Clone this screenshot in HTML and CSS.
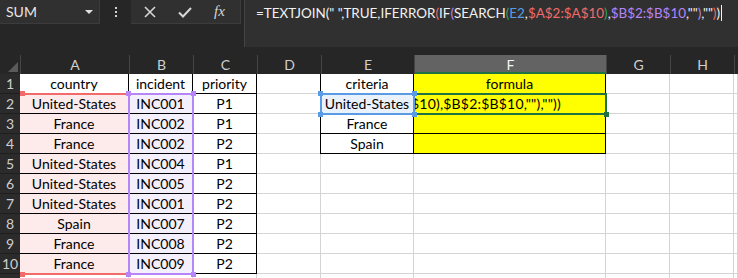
FILE: index.html
```html
<!DOCTYPE html>
<html lang="en">
<head>
    <meta charset="UTF-8">
    <title>TEXTJOIN</title>
    <link rel="stylesheet" href="styles.css">
</head>
<body>
<div class="app">
    <div class="toolbar">
        <div class="tools">
            <div class="namebox">SUM <span class="caret"></span></div>
            <div class="dots"><i></i><i></i><i></i></div>
            <div class="fbuttons">
                <svg width="12" height="12" viewBox="0 0 12 12"><path d="M1 1L11 11M11 1L1 11" stroke="#d6d6d6" stroke-width="1.6" fill="none"/></svg>
                <svg width="14" height="12" viewBox="0 0 14 12"><path d="M1 6.5L5 10.5L13 2" stroke="#d6d6d6" stroke-width="2" fill="none"/></svg>
                <span class="fx">fx</span>
            </div>
        </div>
        <div class="formula">=TEXTJOIN(" ",TRUE,IFERROR<span class="r">(</span>IF<span class="p">(</span>SEARCH<span class="g">(</span><span class="b">E2</span>,<span class="r">$A$2:$A$10</span><span class="g">)</span>,<span class="p">$B$2:$B$10</span>,""<span class="p">)</span>,""<span class="r">)</span>)<span class="cursor"></span></div>
    </div>

    <div class="sheet">
        <div class="row head">
            <div class="corner"><span></span></div>
            <div class="ch">A</div><div class="ch">B</div><div class="ch">C</div><div class="ch">D</div>
            <div class="ch">E</div><div class="ch on">F</div><div class="ch">G</div><div class="ch">H</div><div class="ch"></div>
        </div>
        <div class="row">
            <div class="rh">1</div>
            <div class="c t">country</div><div class="c t">incident</div><div class="c t">priority</div><div class="c"></div>
            <div class="c t tl">criteria</div><div class="c t y">formula</div><div class="c"></div><div class="c"></div><div class="c"></div>
        </div>
        <div class="row">
            <div class="rh">2</div>
            <div class="c t ra">United-States</div><div class="c t rb">INC001</div><div class="c t">P1</div><div class="c"></div>
            <div class="c t tl sel">United-States</div>
            <div class="c t y edit"><span>$10),$B$2:$B$10,""),""))</span></div>
            <div class="c"></div><div class="c"></div><div class="c"></div>
        </div>
        <div class="row">
            <div class="rh">3</div>
            <div class="c t ra">France</div><div class="c t rb">INC002</div><div class="c t">P1</div><div class="c"></div>
            <div class="c t tl">France</div><div class="c t y"></div><div class="c"></div><div class="c"></div><div class="c"></div>
        </div>
        <div class="row">
            <div class="rh">4</div>
            <div class="c t ra">France</div><div class="c t rb">INC002</div><div class="c t">P2</div><div class="c"></div>
            <div class="c t tl">Spain</div><div class="c t y"></div><div class="c"></div><div class="c"></div><div class="c"></div>
        </div>
        <div class="row">
            <div class="rh">5</div>
            <div class="c t ra">United-States</div><div class="c t rb">INC004</div><div class="c t">P1</div><div class="c"></div>
            <div class="c"></div><div class="c"></div><div class="c"></div><div class="c"></div><div class="c"></div>
        </div>
        <div class="row">
            <div class="rh">6</div>
            <div class="c t ra">United-States</div><div class="c t rb">INC005</div><div class="c t">P2</div><div class="c"></div>
            <div class="c"></div><div class="c"></div><div class="c"></div><div class="c"></div><div class="c"></div>
        </div>
        <div class="row">
            <div class="rh">7</div>
            <div class="c t ra">United-States</div><div class="c t rb">INC001</div><div class="c t">P2</div><div class="c"></div>
            <div class="c"></div><div class="c"></div><div class="c"></div><div class="c"></div><div class="c"></div>
        </div>
        <div class="row">
            <div class="rh">8</div>
            <div class="c t ra">Spain</div><div class="c t rb">INC007</div><div class="c t">P2</div><div class="c"></div>
            <div class="c"></div><div class="c"></div><div class="c"></div><div class="c"></div><div class="c"></div>
        </div>
        <div class="row">
            <div class="rh">9</div>
            <div class="c t ra">France</div><div class="c t rb">INC008</div><div class="c t">P2</div><div class="c"></div>
            <div class="c"></div><div class="c"></div><div class="c"></div><div class="c"></div><div class="c"></div>
        </div>
        <div class="row">
            <div class="rh">10</div>
            <div class="c t ra">France</div><div class="c t rb">INC009</div><div class="c t">P2</div><div class="c"></div>
            <div class="c"></div><div class="c"></div><div class="c"></div><div class="c"></div><div class="c"></div>
        </div>
        <div class="row">
            <div class="rh"></div>
            <div class="c"></div><div class="c"></div><div class="c"></div><div class="c"></div>
            <div class="c"></div><div class="c"></div><div class="c"></div><div class="c"></div><div class="c"></div>
        </div>

        <!-- reference highlights drawn over the grid -->
        <div class="range range-a"><i class="h tl"></i><i class="h bl"></i></div>
        <div class="range range-b"><i class="h tl"></i><i class="h tr"></i><i class="h bl"></i><i class="h br"></i></div>
        <div class="range range-f"><i class="h br"></i></div>
        <div class="range range-e"><i class="h tl"></i><i class="h tr"></i><i class="h bl"></i><i class="h br"></i></div>
    </div>
</div>
</body>
</html>
```

FILE: styles.css
```css
body {
    margin: 0;
    background: #262626;
    font-family: Lato, "Liberation Sans", sans-serif;
    overflow: hidden;
}
.app {
    width: 738px;
    height: 278px;
    overflow: hidden;
}

/* toolbar / formula bar */
.toolbar {
    display: flex;
    height: 55px;
}
.tools {
    display: flex;
    height: 24px;
}
.namebox {
    width: 100px;
    height: 24px;
    box-sizing: border-box;
    padding: 0 6px;
    background: #303030;
    border-right: 1px solid #3c3c3c;
    border-bottom: 1px solid #3c3c3c;
    color: #e6e6e6;
    font-size: 14px;
    display: flex;
    align-items: center;
    justify-content: space-between;
}
.caret {
    width: 0;
    height: 0;
    border-left: 4px solid transparent;
    border-right: 4px solid transparent;
    border-top: 4px solid #e0e0e0;
}
.dots {
    width: 31px;
    display: flex;
    flex-direction: column;
    align-items: center;
    justify-content: center;
    gap: 2px;
}
.dots i {
    width: 2px;
    height: 2px;
    background: #d0d0d0;
}
.fbuttons {
    width: 110px;
    height: 24px;
    box-sizing: border-box;
    background: #303030;
    border-right: 1px solid #3c3c3c;
    border-bottom: 1px solid #3c3c3c;
    display: flex;
    align-items: center;
    gap: 23px;
    padding-left: 13px;
}
.fbuttons svg + svg {
    margin-left: -1px;
}
.fx {
    font-family: "Liberation Serif", serif;
    font-style: italic;
    color: #d6d6d6;
    font-size: 15px;
    margin-left: -1px;
}
.formula {
    flex: 1;
    height: 47px;
    margin-left: 3px;
    box-sizing: border-box;
    background: #303030;
    border-left: 1px solid #444;
    padding: 3px 0 0 11px;
    color: #f2f2f2;
    font-size: 13.45px;
    line-height: 20px;
    white-space: nowrap;
}
.formula .r { color: #f26b6b; }
.formula .p { color: #b685f7; }
.formula .g { color: #33a15c; }
.formula .b { color: #5a9be6; }
.cursor {
    display: inline-block;
    width: 1px;
    height: 16px;
    background: #f2f2f2;
    vertical-align: -3px;
    margin-left: 1px;
}

/* sheet */
.sheet {
    position: relative;
}
.row {
    display: grid;
    grid-template-columns: 20px 109px 64px 64px 64px 93px 192px 64px 64px 4px;
    height: 20px;
}
.row.head {
    height: 19px;
}
.corner {
    background: #262626;
    position: relative;
}
.corner span {
    position: absolute;
    right: 2px;
    bottom: 2px;
    width: 10px;
    height: 10px;
    background: #5a5a5a;
    clip-path: polygon(100% 0, 100% 100%, 0 100%);
}
.ch {
    background: #262626;
    border-left: 1px solid #454545;
    color: #cfcfcf;
    font-size: 14px;
    line-height: 19px;
    text-align: center;
}
.ch.on {
    background: #636363;
    color: #f4f4f4;
    box-shadow: inset 0 -2px 0 #1f7244;
}
.rh {
    background: #2b2b2b;
    border-bottom: 1px solid #1e1e1e;
    color: #cfcfcf;
    font-size: 14px;
    line-height: 19px;
    text-align: center;
}
.c {
    background: #fff;
    border-right: 1px solid #d4d4d4;
    border-bottom: 1px solid #d4d4d4;
    color: #000;
    font-size: 14px;
    line-height: 19px;
    text-align: center;
    white-space: nowrap;
    overflow: hidden;
}
.c.t {
    border-right-color: #000;
    border-bottom-color: #000;
}
.c.tl {
    box-shadow: -1px 0 0 #000;
}
.c.ra { background: #fdeaea; }
.c.rb { background: #f4effd; }
.c.sel { background: #e9f1fd; }
.c.y { background: #ffff00; }
.c.edit {
    text-align: left;
}
.c.edit span {
    margin-left: -3px;
    letter-spacing: 0.2px;
}

/* range highlights */
.range {
    position: absolute;
    box-sizing: border-box;
    border: 2px solid;
    top: 38px;
    height: 182px;
}
.range .h {
    position: absolute;
    width: 5px;
    height: 5px;
    background: currentColor;
}
.h.tl { left: -4px; top: -4px; }
.h.tr { right: -4px; top: -4px; }
.h.bl { left: -4px; bottom: -4px; }
.h.br { right: -4px; bottom: -4px; }
.range-a {
    left: 20px;
    width: 110px;
    color: #f26b6b;
    border-left: 0;
}
.range-a .h.tl, .range-a .h.bl { left: 0; }
.range-b {
    left: 128px;
    width: 66px;
    color: #b685f7;
}
.range-e {
    left: 320px;
    width: 95px;
    height: 22px;
    color: #5a9be6;
}
.range-f {
    left: 413px;
    width: 194px;
    height: 22px;
    color: #1f7244;
}
```
